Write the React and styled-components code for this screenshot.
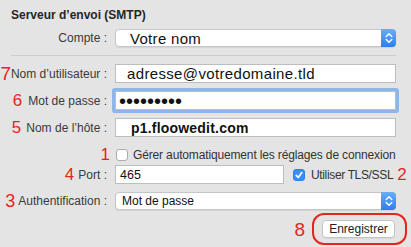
import React from "react";
import styled, { createGlobalStyle } from "styled-components";

const GlobalStyle = createGlobalStyle`
  html, body {
    margin: 0;
    padding: 0;
    background: #e4e4e4;
  }
  body {
    font-family: "Liberation Sans", Arial, sans-serif;
    color: #333;
  }
`;

const Panel = styled.div`
  width: 411px;
  height: 247px;
  box-sizing: border-box;
  padding-top: 8px;
  background: #e4e4e4;
  overflow: hidden;
`;

const Title = styled.div`
  padding-left: 11px;
  font-size: 12px;
  font-weight: bold;
  line-height: 14px;
  color: #262626;
`;

const Row = styled.div`
  display: grid;
  grid-template-columns: 107px 281px;
  column-gap: 8px;
  align-items: center;
  height: ${(p) => p.$h}px;
  margin-top: ${(p) => p.$mt}px;
`;

const Separator = styled.div`
  height: 1px;
  margin: 8px 15px 0 11px;
  background: #cdcdcd;
`;

const Label = styled.div`
  display: flex;
  justify-content: flex-end;
  align-items: center;
  white-space: nowrap;
  font-size: 12px;
  color: #3a3a3a;
`;

const Num = styled.span`
  flex: none;
  color: #e5261c;
  font-size: ${(p) => p.$size || 17}px;
  line-height: 1;
  letter-spacing: 0;
  margin-right: ${(p) => p.$gap || 0}px;
  margin-left: ${(p) => p.$left || 0}px;
`;

const TextField = styled.div`
  box-sizing: border-box;
  flex: none;
  height: 19px;
  width: ${(p) => p.$w || "100%"};
  display: flex;
  align-items: center;
  padding-left: ${(p) => p.$pl}px;
  background: #fff;
  border: 1px solid #bdbdbd;
  border-radius: ${(p) => (p.$focus ? "1px" : "0")};
  box-shadow: ${(p) => (p.$focus ? "0 0 0 3px #8cb7ed" : "none")};
  font-size: ${(p) => p.$fs}px;
  font-weight: ${(p) => (p.$bold ? 700 : 400)};
  letter-spacing: ${(p) => p.$ls || 0}px;
  color: #111;
  white-space: nowrap;
  overflow: hidden;
`;

const Dots = styled.span`
  font-size: 20px;
  line-height: 1;
  color: #111;
`;

const Select = styled.div`
  box-sizing: border-box;
  height: 18px;
  display: flex;
  align-items: stretch;
  background: #fff;
  border: 1px solid #c6c6c6;
  border-radius: 4px;
  box-shadow: 0 1px 1px rgba(0, 0, 0, 0.07);
`;

const SelectValue = styled.div`
  flex: 1;
  display: flex;
  align-items: center;
  padding-left: ${(p) => p.$pl}px;
  font-size: ${(p) => p.$fs}px;
  letter-spacing: ${(p) => p.$ls || 0}px;
  color: #111;
  white-space: nowrap;
`;

const Stepper = styled.div`
  width: 15px;
  margin: -1px -1px -1px 0;
  border-radius: 0 4px 4px 0;
  background: linear-gradient(#6aacfc, #2d7ef6);
  display: flex;
  align-items: center;
  justify-content: center;
`;

const Inline = styled.div`
  display: flex;
  align-items: center;
  white-space: nowrap;
  font-size: 12px;
  color: #333;
`;

const Caption = styled.span`
  flex: none;
  letter-spacing: ${(p) => p.$ls || 0}px;
`;

const Box = styled.span`
  box-sizing: border-box;
  flex: none;
  width: 12px;
  height: 12px;
  border-radius: 3px;
  background: ${(p) => (p.$on ? "#3b8ef6" : "#fff")};
  border: 1px solid ${(p) => (p.$on ? "#2f7fe8" : "#adadad")};
  display: inline-flex;
  align-items: center;
  justify-content: center;
  margin-left: ${(p) => p.$ml || 0}px;
  margin-right: ${(p) => p.$mr || 0}px;
`;

const ButtonRow = styled.div`
  display: flex;
  justify-content: flex-end;
  align-items: center;
  margin-top: 3px;
  padding-right: 4px;
`;

const Callout = styled.div`
  box-sizing: border-box;
  width: 95px;
  height: 32px;
  border: 2px solid #e5261c;
  border-radius: 12px;
  display: flex;
  align-items: center;
  padding-left: 8px;
`;

const Button = styled.button`
  box-sizing: border-box;
  width: 73px;
  height: 18px;
  padding: 0;
  background: #fff;
  border: 1px solid #c4c4c4;
  border-radius: 4px;
  box-shadow: 0 1px 1px rgba(0, 0, 0, 0.06);
  font-family: "Liberation Sans", Arial, sans-serif;
  font-size: 12px;
  color: #222;
`;

const Arrows = () => (
  <svg width="8" height="12" viewBox="0 0 8 12">
    <path
      d="M1.2 4.6 L4 1.8 L6.8 4.6 M1.2 7.4 L4 10.2 L6.8 7.4"
      fill="none"
      stroke="#fff"
      strokeWidth="1.4"
      strokeLinecap="round"
      strokeLinejoin="round"
    />
  </svg>
);

const Tick = () => (
  <svg width="10" height="10" viewBox="0 0 10 10">
    <path
      d="M2.2 5.3 L4.2 7.4 L7.8 2.6"
      fill="none"
      stroke="#fff"
      strokeWidth="1.7"
      strokeLinecap="round"
      strokeLinejoin="round"
    />
  </svg>
);

const App = () => (
  <Panel>
    <GlobalStyle />
    <Title>Serveur d’envoi (SMTP)</Title>

    <Row $h={18} $mt={7}>
      <Label>Compte :</Label>
      <Select>
        <SelectValue $pl={14} $fs={15} $ls={0.3}>Votre nom</SelectValue>
        <Stepper><Arrows /></Stepper>
      </Select>
    </Row>

    <Separator />

    <Row $h={19} $mt={8}>
      <Label><Num $size={19}>7</Num>Nom d’utilisateur :</Label>
      <TextField $pl={11} $fs={15} $ls={0.35}>adresse@votredomaine.tld</TextField>
    </Row>

    <Row $h={19} $mt={8}>
      <Label><Num $gap={6}>6</Num>Mot de passe :</Label>
      <TextField $pl={3} $focus><Dots>•••••••••</Dots></TextField>
    </Row>

    <Row $h={19} $mt={8}>
      <Label><Num $gap={5}>5</Num>Nom de l’hôte :</Label>
      <TextField $pl={15} $fs={14} $bold $ls={0.2}>p1.floowedit.com</TextField>
    </Row>

    <Row $h={12} $mt={9}>
      <Label><Num $gap={-3}>1</Num></Label>
      <Inline>
        <Box $ml={1} $mr={5} />
        <Caption $ls={-0.15}>Gérer automatiquement les réglages de connexion</Caption>
      </Inline>
    </Row>

    <Row $h={19} $mt={7}>
      <Label><Num $gap={4}>4</Num>Port :</Label>
      <Inline>
        <TextField $w="169px" $pl={4} $fs={12.5}>465</TextField>
        <Box $on $ml={9} $mr={6}><Tick /></Box>
        <Caption $ls={-0.35}>Utiliser TLS/SSL</Caption>
        <Num $left={4}>2</Num>
      </Inline>
    </Row>

    <Row $h={18} $mt={8}>
      <Label><Num $size={18} $gap={3}>3</Num>Authentification :</Label>
      <Select>
        <SelectValue $pl={6} $fs={12}>Mot de passe</SelectValue>
        <Stepper><Arrows /></Stepper>
      </Select>
    </Row>

    <ButtonRow>
      <Num $size={19} $gap={7}>8</Num>
      <Callout>
        <Button>Enregistrer</Button>
      </Callout>
    </ButtonRow>
  </Panel>
);

export default App;
